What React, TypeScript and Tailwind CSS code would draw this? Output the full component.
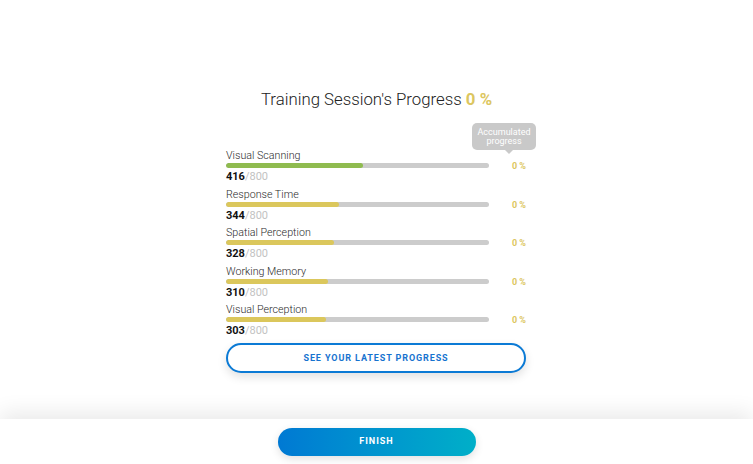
import React from "react";

type Skill = { name: string; score: number; color: string };

const skills: Skill[] = [
  { name: "Visual Scanning", score: 416, color: "bg-[#8fbb4f]" },
  { name: "Response Time", score: 344, color: "bg-[#dbc75c]" },
  { name: "Spatial Perception", score: 328, color: "bg-[#dbc75c]" },
  { name: "Working Memory", score: 310, color: "bg-[#dbc75c]" },
  { name: "Visual Perception", score: 303, color: "bg-[#dbc75c]" },
];

const MAX = 800;

const SkillRow = ({ skill }: { skill: Skill }) => (
  <div className="flex items-start">
    <div className="w-[263px]">
      <p className="h-[14px] text-[10.7px] leading-[14px] font-light text-[#2a2a2a]">
        {skill.name}
      </p>
      <div className="h-[5px] w-full rounded-full bg-[#cccccc] overflow-hidden">
        <div
          className={`h-full rounded-full ${skill.color}`}
          style={{ width: `${(skill.score / MAX) * 100}%` }}
        />
      </div>
      <p className="mt-[2px] h-[14px] text-[11px] leading-[14px]">
        <span className="font-bold text-[#111]">{skill.score}</span>
        <span className="text-[#c2c2c2]">/{MAX}</span>
      </p>
    </div>
    <div className="mt-[10px] flex-1 text-right text-[9px] leading-[14px] font-bold text-[#dcc660]">
      0 %
    </div>
  </div>
);

export default function App() {
  return (
    <div
      className="flex h-screen flex-col bg-white"
      style={{ fontFamily: "Roboto, 'Liberation Sans', sans-serif" }}
    >
      <main className="flex flex-1 flex-col items-center pt-[88px]">
        <h1 className="text-[16.8px] leading-[22px] font-light text-[#222]">
          Training Session's Progress{" "}
          <span className="font-bold text-[#dcc660]">0 %</span>
        </h1>
        <div className="relative mt-[39px] mr-[1px] w-[300px]">
          <div className="absolute -top-[26px] left-[246px] flex h-[27px] w-[64px] items-center justify-center rounded-[5px] bg-[#c9c9c9] text-center text-[9px] leading-[9px] text-white">
            Accumulated
            <br />
            progress
            <span className="absolute -bottom-[4px] left-[33px] h-0 w-0 border-x-[4px] border-t-[4px] border-x-transparent border-t-[#c9c9c9]" />
          </div>
          <div className="flex flex-col gap-[3.6px]">
            {skills.map((s) => (
              <SkillRow key={s.name} skill={s} />
            ))}
          </div>
          <button className="mt-[5px] flex h-[30px] w-full items-center justify-center rounded-full border-2 border-[#0b7ad5] bg-white text-[9px] font-bold tracking-[0.9px] text-[#1673cf] shadow-[0_4px_10px_rgba(0,0,0,0.12)]">
            SEE YOUR LATEST PROGRESS
          </button>
        </div>
      </main>
      <footer className="flex h-[45px] items-center justify-center bg-white shadow-[0_-6px_22px_rgba(0,0,0,0.09)]">
        <button className="h-[28px] w-[198px] rounded-full bg-gradient-to-r from-[#0079d3] to-[#00afc8] text-[9px] font-bold tracking-[1px] text-white shadow-[0_3px_8px_rgba(0,0,0,0.12)]">
          FINISH
        </button>
      </footer>
    </div>
  );
}
